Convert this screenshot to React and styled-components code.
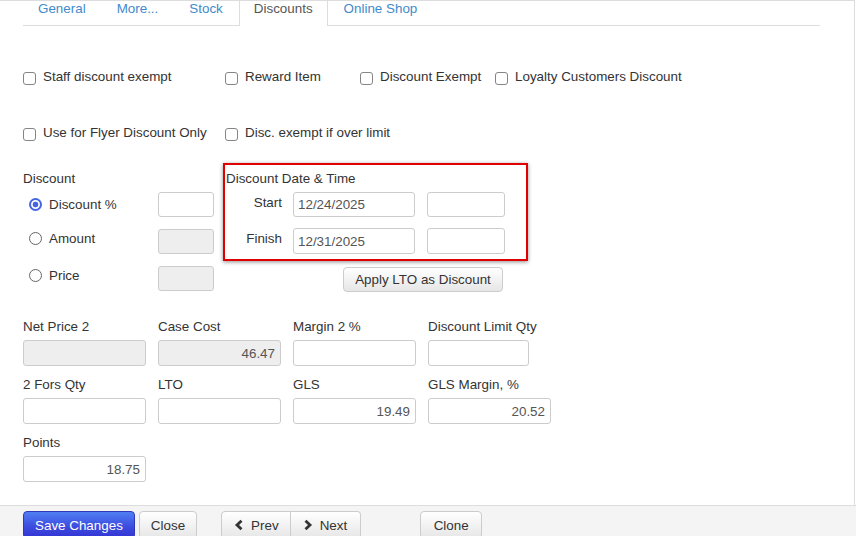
import React from 'react';
import styled, { createGlobalStyle } from 'styled-components';

const GlobalStyle = createGlobalStyle`
  * { box-sizing: border-box; }
  body {
    margin: 0;
    font-family: "Liberation Sans", Arial, sans-serif;
    font-size: 13.4px;
    color: #333;
    background: #fff;
  }
`;

const checks = [
  'Staff discount exempt',
  'Reward Item',
  'Discount Exempt',
  'Loyalty Customers Discount',
  'Use for Flyer Discount Only',
  'Disc. exempt if over limit',
];

const fields = [
  { label: 'Net Price 2', disabled: true },
  { label: 'Case Cost', value: '46.47', disabled: true },
  { label: 'Margin 2 %' },
  { label: 'Discount Limit Qty', width: 101 },
  { label: '2 Fors Qty' },
  { label: 'LTO' },
  { label: 'GLS', value: '19.49' },
  { label: 'GLS Margin, %', value: '20.52' },
  { label: 'Points', value: '18.75' },
];

const Chevron = ({ dir }) => (
  <svg width="12" height="12" viewBox="0 0 12 12" style={{ marginRight: 6, flex: 'none' }}>
    <path
      d={dir === 'left' ? 'M8.5 1.8 L4 6 L8.5 10.2' : 'M3.5 1.8 L8 6 L3.5 10.2'}
      fill="none"
      stroke="#333"
      strokeWidth="2.8"
    />
  </svg>
);

const App = () => {
  return (
    <Page>
      <GlobalStyle />
      <Panel>
        <TabList>
          {['General', 'More...', 'Stock', 'Discounts', 'Online Shop'].map((t) => (
            <Tab key={t} $active={t === 'Discounts'}>
              <a>{t}</a>
            </Tab>
          ))}
        </TabList>

        <CheckGrid>
          {checks.map((c) => (
            <CheckItem key={c}>
              <CheckBox type="checkbox" />
              <span>{c}</span>
            </CheckItem>
          ))}
        </CheckGrid>

        <Middle>
          <LeftCol>
            <Heading>Discount</Heading>
            <RadioList>
              <RadioRow>
                <RadioOption $top={4}>
                  <Radio type="radio" name="disc" defaultChecked />
                  Discount %
                </RadioOption>
                <SmallInput />
              </RadioRow>
              <RadioRow>
                <RadioOption $top={1}>
                  <Radio type="radio" name="disc" />
                  Amount
                </RadioOption>
                <SmallInput disabled $disabled />
              </RadioRow>
              <RadioRow>
                <RadioOption $top={1}>
                  <Radio type="radio" name="disc" />
                  Price
                </RadioOption>
                <SmallInput disabled $disabled />
              </RadioRow>
            </RadioList>
          </LeftCol>

          <DateCol>
            <DateBox>
              <Heading>Discount Date &amp; Time</Heading>
              <DateRows>
                <DateRow>
                  <DateLabel>Start</DateLabel>
                  <DateInput defaultValue="12/24/2025" />
                  <TimeInput />
                </DateRow>
                <DateRow>
                  <DateLabel>Finish</DateLabel>
                  <DateInput defaultValue="12/31/2025" $tall />
                  <TimeInput $tall />
                </DateRow>
              </DateRows>
            </DateBox>
            <ApplyButton>Apply LTO as Discount</ApplyButton>
          </DateCol>
        </Middle>

        <FieldGrid>
          {fields.map((f) => (
            <Field key={f.label}>
              <FieldLabel>{f.label}</FieldLabel>
              <FieldInput
                defaultValue={f.value || ''}
                disabled={f.disabled}
                $disabled={f.disabled}
                $width={f.width}
              />
            </Field>
          ))}
        </FieldGrid>
      </Panel>

      <Footer>
        <Button $primary>Save Changes</Button>
        <Button $ml={4}>Close</Button>
        <ButtonGroup>
          <Button $group="left">
            <Chevron dir="left" />
            Prev
          </Button>
          <Button $group="right">
            <Chevron dir="right" />
            Next
          </Button>
        </ButtonGroup>
        <Button $ml={59} $px={12.5}>Clone</Button>
      </Footer>
    </Page>
  );
};

export default App;

const Page = styled.div`
  width: 856px;
  height: 536px;
  overflow: hidden;
  display: flex;
  flex-direction: column;
`;

const Panel = styled.div`
  flex: none;
  width: 855px;
  height: 505px;
  border-top: 1px solid #ddd;
  border-right: 1px solid #ddd;
`;

const TabList = styled.ul`
  list-style: none;
  margin: 0 0 0 23px;
  padding: 0;
  width: 797px;
  height: 25px;
  display: flex;
  border-bottom: 1px solid #ddd;
`;

const Tab = styled.li`
  padding: 0 14px;
  margin-right: 1px;
  line-height: 15px;
  border: 1px solid transparent;
  border-top: 0;
  border-bottom: 0;
  background: #fff;
  a {
    color: ${(p) => (p.$active ? '#555' : '#428bca')};
    text-decoration: none;
    cursor: pointer;
  }
  ${(p) =>
    p.$active &&
    `
    border-left-color: #ddd;
    border-right-color: #ddd;
    margin-bottom: -1px;
  `}
`;

const CheckGrid = styled.div`
  display: grid;
  grid-template-columns: 202px 135px 135px auto;
  row-gap: 39px;
  margin: 42px 0 0 23px;
`;

const CheckItem = styled.label`
  display: flex;
  align-items: flex-start;
  line-height: 17px;
  white-space: nowrap;
`;

const CheckBox = styled.input`
  appearance: none;
  flex: none;
  width: 13px;
  height: 13px;
  margin: 4px 7px 0 0;
  border: 1px solid #858585;
  border-radius: 3px;
  background: #fff;
`;

const Middle = styled.div`
  display: flex;
  align-items: flex-start;
  margin: 22px 0 0 23px;
`;

const LeftCol = styled.div`
  width: 200px;
  padding-top: 7px;
`;

const Heading = styled.div`
  line-height: 17px;
  margin-bottom: 5px;
`;

const RadioList = styled.div`
  display: flex;
  flex-direction: column;
  gap: 12px;
`;

const RadioRow = styled.div`
  display: flex;
  align-items: flex-start;
  height: 25px;
`;

const RadioOption = styled.label`
  width: 135px;
  display: flex;
  align-items: center;
  line-height: 17px;
  padding-top: ${(p) => p.$top}px;
`;

const Radio = styled.input`
  appearance: none;
  flex: none;
  width: 13px;
  height: 13px;
  margin: 0 7px 0 6px;
  border: 1px solid #666;
  border-radius: 50%;
  background: #fff;
  &:checked {
    border: 2px solid #4565e3;
    background: radial-gradient(circle, #4565e3 0 2.6px, #fff 3.2px);
  }
`;

const SmallInput = styled.input`
  width: 56px;
  height: 25px;
  border: 1px solid #ccc;
  border-radius: 3px;
  background: ${(p) => (p.$disabled ? '#eee' : '#fff')};
  font: inherit;
`;

const DateCol = styled.div`
  display: flex;
  flex-direction: column;
  align-items: flex-start;
`;

const DateBox = styled.div`
  width: 305px;
  border: 2px solid #e00000;
  box-shadow: 0 1px 4px rgba(0, 0, 0, 0.45);
  padding: 5px 20px 5px 1px;
`;

const DateRows = styled.div`
  display: flex;
  flex-direction: column;
  gap: 11px;
`;

const DateRow = styled.div`
  display: flex;
  align-items: flex-start;
`;

const DateLabel = styled.div`
  width: 56px;
  margin-right: 11px;
  text-align: right;
  line-height: 17px;
  padding-top: 2px;
`;

const DateInput = styled.input`
  width: 122px;
  height: ${(p) => (p.$tall ? 26 : 25)}px;
  border: 1px solid #ccc;
  border-radius: 3px;
  padding: 0 4px;
  font: inherit;
  color: #555;
`;

const TimeInput = styled(DateInput)`
  width: 78px;
  margin-left: 12px;
`;

const ApplyButton = styled.button`
  margin: 6px 0 0 120px;
  width: 160px;
  height: 25px;
  border: 1px solid #ccc;
  border-radius: 4px;
  background: linear-gradient(#fff, #e6e6e6);
  font: inherit;
  color: #333;
  padding: 0;
`;

const FieldGrid = styled.div`
  display: grid;
  grid-template-columns: repeat(4, 123px);
  column-gap: 12px;
  row-gap: 10px;
  margin: 26px 0 0 23px;
`;

const Field = styled.div`
  display: flex;
  flex-direction: column;
`;

const FieldLabel = styled.div`
  line-height: 17px;
  margin-bottom: 5px;
  white-space: nowrap;
`;

const FieldInput = styled.input`
  width: ${(p) => (p.$width ? `${p.$width}px` : '100%')};
  height: 26px;
  border: 1px solid #ccc;
  border-radius: 3px;
  padding: 0 5px;
  text-align: right;
  font: inherit;
  color: #555;
  background: ${(p) => (p.$disabled ? '#eee' : '#fff')};
`;

const Footer = styled.div`
  flex: 1;
  display: flex;
  align-items: flex-start;
  border-top: 1px solid #ddd;
  background: #f4f4f4;
  padding: 5px 0 0 23px;
`;

const ButtonGroup = styled.div`
  display: flex;
  margin-left: 24px;
`;

const Button = styled.button`
  display: flex;
  align-items: center;
  height: 28px;
  padding: 0 ${(p) => (p.$group === 'right' ? '13px 0 11px' : `${p.$px || 11}px`)};
  margin-left: ${(p) => p.$ml || 0}px;
  border: 1px solid #ccc;
  border-radius: ${(p) =>
    p.$group === 'left' ? '4px 0 0 4px' : p.$group === 'right' ? '0 4px 4px 0' : '4px'};
  ${(p) => p.$group === 'right' && 'border-left: 0;'}
  background: linear-gradient(#fff, #e6e6e6);
  font: inherit;
  color: #333;
  white-space: nowrap;
  ${(p) =>
    p.$primary &&
    `
    background: linear-gradient(#4f7ff3 0%, #3d4ddf 55%, #3333d2 100%);
    border-color: #2d39b8;
    color: #fff;
  `}
`;
